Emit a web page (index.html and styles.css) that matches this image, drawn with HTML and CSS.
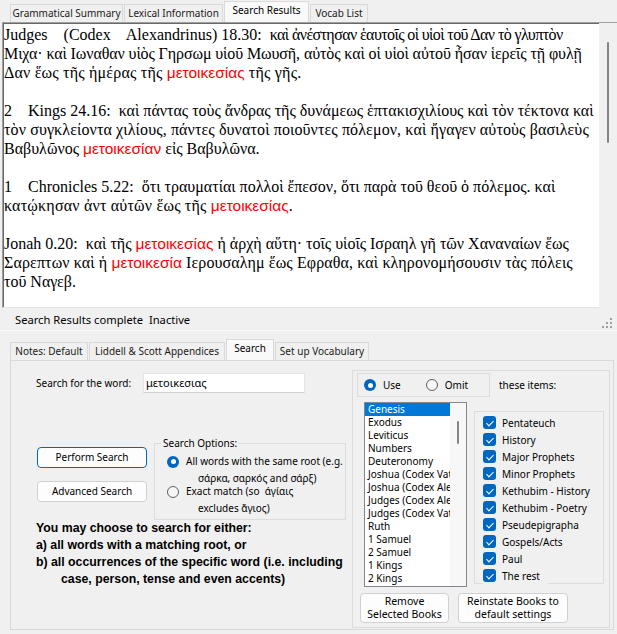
FILE: index.html
```html
<!DOCTYPE html>
<html lang="en">
<head>
<meta charset="utf-8">
<title>Search</title>
<link rel="stylesheet" href="styles.css">
</head>
<body>
<div class="top">
  <div class="tabs top-tabs">
    <div class="tab w-gram">Grammatical Summary</div>
    <div class="tab w-lex">Lexical Information</div>
    <div class="tab sel w-res">Search Results</div>
    <div class="tab w-voc">Vocab List</div>
  </div>
  <div class="results">
    <div class="text" lang="grc">
      <div class="para">
        <div class="ln fit-a"><span class="ref" lang="en"><span class="bk">Judges (Codex Alexandrinus)</span> 18.30:&nbsp; </span>καὶ ἀνέστησαν ἑαυτοῖς οἱ υἱοὶ τοῦ Δαν τὸ γλυπτὸν</div>
        <div class="ln fit-b">Μιχα· καὶ Ιωναθαν υἱὸς Γηρσωμ υἱοῦ Μωυσῆ, αὐτὸς καὶ οἱ υἱοὶ αὐτοῦ ἦσαν ἱερεῖς τῇ φυλῇ</div>
        <div class="ln fit-c">Δαν ἕως τῆς ἡμέρας τῆς <span class="hit">μετοικεσίας</span> τῆς γῆς.</div>
      </div>
      <div class="para">
        <div class="ln"><span class="ref" lang="en"><span class="bk">2 Kings</span> 24.16:&nbsp; </span>καὶ πάντας τοὺς ἄνδρας τῆς δυνάμεως ἑπτακισχιλίους καὶ τὸν τέκτονα καὶ</div>
        <div class="ln fit-d">τὸν συγκλείοντα χιλίους, πάντες δυνατοὶ ποιοῦντες πόλεμον, καὶ ἤγαγεν αὐτοὺς βασιλεὺς</div>
        <div class="ln">Βαβυλῶνος <span class="hit">μετοικεσίαν</span> εἰς Βαβυλῶνα.</div>
      </div>
      <div class="para">
        <div class="ln"><span class="ref" lang="en"><span class="bk">1 Chronicles</span> 5.22:&nbsp; </span>ὅτι τραυματίαι πολλοὶ ἔπεσον, ὅτι παρὰ τοῦ θεοῦ ὁ πόλεμος. καὶ</div>
        <div class="ln fit-c">κατῴκησαν ἀντ αὐτῶν ἕως τῆς <span class="hit">μετοικεσίας</span>.</div>
      </div>
      <div class="para">
        <div class="ln"><span class="ref" lang="en">Jonah 0.20:&nbsp; </span>καὶ τῆς <span class="hit">μετοικεσίας</span> ἡ ἀρχὴ αὕτη· τοῖς υἱοῖς Ισραηλ γῆ τῶν Χαναναίων ἕως</div>
        <div class="ln fit-d">Σαρεπτων καὶ ἡ <span class="hit">μετοικεσία</span> Ιερουσαλημ ἕως Εφραθα, καὶ κληρονομήσουσιν τὰς πόλεις</div>
        <div class="ln">τοῦ Ναγεβ.</div>
      </div>
    </div>
    <div class="vscroll"><div class="thumb"></div></div>
  </div>
</div>

<div class="status">
  <span class="status-text">Search Results complete&nbsp; Inactive</span>
  <svg class="grip" width="10" height="10" viewBox="0 0 10 10" aria-hidden="true">
    <rect x="8" y="0" width="2" height="2" fill="#a0a0a0"/>
    <rect x="4" y="4" width="2" height="2" fill="#a0a0a0"/>
    <rect x="8" y="4" width="2" height="2" fill="#a0a0a0"/>
    <rect x="0" y="8" width="2" height="2" fill="#a0a0a0"/>
    <rect x="4" y="8" width="2" height="2" fill="#a0a0a0"/>
    <rect x="8" y="8" width="2" height="2" fill="#a0a0a0"/>
  </svg>
</div>

<div class="bottom">
  <div class="tabs bottom-tabs">
    <div class="tab w-notes">Notes: Default</div>
    <div class="tab w-ls">Liddell &amp; Scott Appendices</div>
    <div class="tab sel w-search">Search</div>
    <div class="tab w-setup">Set up Vocabulary</div>
  </div>
  <div class="panel">
    <div class="leftcol">
      <div class="wordrow">
        <span class="wordlabel">Search for the word:</span>
        <div class="input">μετοικεσιας</div>
      </div>
      <div class="actions">
        <div class="btns">
          <div class="btn primary">Perform Search</div>
          <div class="btn">Advanced Search</div>
        </div>
        <fieldset class="options">
          <legend>Search Options:</legend>
          <div class="radio first">
            <span class="rb on"></span>
            <span class="rtext">All words with the same root (e.g.<br>σάρκα, σαρκός and σάρξ)</span>
          </div>
          <div class="radio second">
            <span class="rb"></span>
            <span class="rtext">Exact match (so&nbsp; άγίαις<br>excludes ἄγιος)</span>
          </div>
        </fieldset>
      </div>
      <div class="help">
        <div>You may choose to search for either:</div>
        <div>a) all words with a matching root, or</div>
        <div class="hang">b) all occurrences of the specific word (i.e. including<br>case, person, tense and even accents)</div>
      </div>
    </div>

    <div class="books">
      <div class="userow">
        <div class="useomit">
          <span class="opt"><span class="rb on"></span>Use</span>
          <span class="opt omit"><span class="rb"></span>Omit</span>
        </div>
        <span class="items-label">these items:</span>
      </div>
      <div class="lists">
        <div class="listbox">
          <div class="items">
            <div class="item selected">Genesis</div>
            <div class="item">Exodus</div>
            <div class="item">Leviticus</div>
            <div class="item">Numbers</div>
            <div class="item">Deuteronomy</div>
            <div class="item">Joshua (Codex Vaticanus)</div>
            <div class="item">Joshua (Codex Alexandrinus)</div>
            <div class="item">Judges (Codex Alexandrinus)</div>
            <div class="item">Judges (Codex Vaticanus)</div>
            <div class="item">Ruth</div>
            <div class="item">1 Samuel</div>
            <div class="item">2 Samuel</div>
            <div class="item">1 Kings</div>
            <div class="item">2 Kings</div>
          </div>
          <div class="lscroll"><div class="lthumb"></div></div>
        </div>
        <div class="checks">
          <div class="chk"><span class="cb"></span>Pentateuch</div>
          <div class="chk"><span class="cb"></span>History</div>
          <div class="chk"><span class="cb"></span>Major Prophets</div>
          <div class="chk"><span class="cb"></span>Minor Prophets</div>
          <div class="chk"><span class="cb"></span>Kethubim - History</div>
          <div class="chk"><span class="cb"></span>Kethubim - Poetry</div>
          <div class="chk"><span class="cb"></span>Pseudepigrapha</div>
          <div class="chk"><span class="cb"></span>Gospels/Acts</div>
          <div class="chk"><span class="cb"></span>Paul</div>
          <div class="chk"><span class="cb"></span>The rest</div>
        </div>
      </div>
      <div class="bookbtns">
        <div class="btn tall w-remove">Remove<br>Selected Books</div>
        <div class="btn tall w-reinstate">Reinstate Books to<br>default settings</div>
      </div>
    </div>
  </div>
</div>
</body>
</html>
```

FILE: styles.css
```css
* { box-sizing: border-box; }
html, body { margin: 0; padding: 0; }
body {
  width: 617px;
  height: 634px;
  overflow: hidden;
  background: #f0f0f0;
  font-family: "Noto Sans", "Open Sans", sans-serif;
  font-size: 10px;
  color: #000;
}

/* ---------- tabs ---------- */
.tabs {
  display: flex;
  align-items: flex-end;
  gap: 1px;
  padding-left: 10px;
}
.top-tabs { height: 22px; }
.tab {
  height: 18px;
  border: 1px solid #d9d9d9;
  border-bottom: none;
  background: #f0f0f0;
  text-align: center;
  line-height: 16px;
  white-space: nowrap;
  color: #1a1a1a;
}
.tab.sel {
  height: 21px;
  background: #f9f9f9;
  line-height: 17px;
  color: #000;
}
.w-gram { width: 113px; }
.w-lex { width: 99px; }
.w-res { width: 85px; }
.w-voc { width: 58px; }
.w-notes { width: 78px; }
.w-ls { width: 136px; }
.w-search { width: 48px; }
.w-setup { width: 94px; }

/* ---------- results ---------- */
.results {
  display: flex;
  height: 286px;
  margin-left: 2px;
  border-top: 1px solid #a0a0a0;
  box-shadow: inset 0 1px 0 #696969;
}
.text {
  flex: 1;
  background: #fff;
  border-left: 1px solid #a0a0a0;
  box-shadow: inset 1px 1px 0 #696969;
  border-bottom: 1px solid #e3e3e3;
  padding: 2px 0 0 1px;
  font-family: "Liberation Serif", "DejaVu Serif Condensed", "DejaVu Serif", serif;
  font-size: 16px;
  line-height: 19px;
  overflow: hidden;
}
.para { margin-bottom: 19px; }
.ln {
  height: 19px;
  white-space: nowrap;
}
.fit-a { letter-spacing: -0.6px; }
.fit-b { letter-spacing: -0.1px; }
.fit-c { letter-spacing: 0.2px; }
.fit-d { letter-spacing: 0.12px; }
.ref {
  font-family: "Liberation Serif", serif;
  letter-spacing: 0;
}
.bk { word-spacing: 12px; }
.hit {
  color: #f00;
  font-family: "Liberation Sans", Arial, sans-serif;
  font-size: 15.5px;
  letter-spacing: 0;
}
.vscroll {
  width: 18px;
  background: #f0f0f0;
  padding: 19px 0 0 8px;
}
.thumb {
  width: 2px;
  height: 101px;
  border-radius: 1px;
  background: #858585;
}

/* ---------- status ---------- */
.status {
  display: flex;
  align-items: center;
  height: 23px;
  padding: 1px 5px 0 15px;
  border-bottom: 1px solid #fbfbfb;
  font-size: 11.2px;
}
.grip { margin-left: auto; margin-top: 6px; }

/* ---------- bottom panel ---------- */
.bottom { margin-top: 8px; }
.bottom-tabs { height: 21px; }
.panel {
  display: flex;
  margin-left: 10px;
  width: 604px;
  height: 270px;
  border: 1px solid #d9d9d9;
}
.leftcol { width: 341px; }

.wordrow {
  display: flex;
  align-items: center;
  margin-top: 12px;
  padding-left: 25px;
  height: 20px;
}
.wordlabel { width: 107px; }
.input {
  width: 162px;
  height: 20px;
  background: #fff;
  border: 1px solid #e5e5e5;
  border-bottom-color: #d0d0d0;
  padding-left: 2px;
  font-size: 11px;
  line-height: 18px;
}

.actions {
  display: flex;
  align-items: flex-start;
  margin-top: 44px;
  padding-left: 26px;
}
.btns {
  width: 110px;
  padding-top: 10px;
}
.btn {
  height: 21px;
  background: #fdfdfd;
  border: 1px solid #d0d0d0;
  border-radius: 4px;
  text-align: center;
  line-height: 19px;
  white-space: nowrap;
}
.btns .btn + .btn { margin-top: 13px; }
.btn.primary { border-color: #0067c0; }

.options {
  margin: 0 0 0 7px;
  width: 192px;
  height: 83px;
  padding: 0 0 0 6px;
  border: 1px solid #dcdcdc;
  min-width: 0;
}
.options legend {
  padding: 0 2px;
  line-height: 13px;
  font-size: 10px;
}
.radio {
  display: flex;
  align-items: flex-start;
  margin-left: 6px;
  line-height: 17px;
}
.radio.first { margin-top: 3px; }
.radio.second { margin-top: -4px; }
.radio .rb { margin-top: 2.5px; }
.rtext {
  margin-left: 7px;
  padding-left: 12px;
  text-indent: -12px;
  white-space: nowrap;
}

.rb {
  flex: none;
  display: inline-flex;
  align-items: center;
  justify-content: center;
  width: 12px;
  height: 12px;
  border-radius: 50%;
  border: 1px solid #5f5f5f;
  background: #f6f6f6;
}
.rb.on {
  border: none;
  background: #0067c0;
}
.rb.on::after {
  content: "";
  width: 5px;
  height: 5px;
  border-radius: 50%;
  background: #fff;
}

.help {
  margin-left: 25px;
  font-family: "Liberation Sans", Arial, sans-serif;
  font-weight: bold;
  font-size: 12.3px;
  line-height: 17px;
  white-space: nowrap;
  color: #000;
}
.help .hang {
  padding-left: 25px;
  text-indent: -25px;
}

/* ---------- right side ---------- */
.books {
  display: flex;
  flex-direction: column;
  margin-top: 9px;
  width: 258px;
  height: 258px;
  border: 1px solid #dcdcdc;
}
.userow {
  display: flex;
  align-items: center;
  margin: 2px 0 0 4px;
}
.useomit {
  display: flex;
  align-items: center;
  width: 133px;
  height: 24px;
  border: 1px solid #dcdcdc;
  padding-left: 6px;
}
.opt {
  display: inline-flex;
  align-items: center;
  gap: 7px;
}
.opt .rb { width: 12px; height: 12px; }
.opt.omit { margin-left: 25px; }
.items-label { margin-left: 9px; }

.lists {
  display: flex;
  align-items: flex-start;
  margin-top: 5px;
  padding-left: 11px;
}
.listbox {
  display: flex;
  width: 103px;
  height: 185px;
  border: 1px solid #828790;
  background: #fff;
}
.items {
  width: 85px;
  overflow: hidden;
}
.item {
  height: 13px;
  line-height: 13px;
  padding-left: 3px;
  white-space: nowrap;
  overflow: hidden;
}
.item.selected {
  background: #0078d7;
  color: #fff;
}
.lscroll {
  flex: 1;
  background: #f7f7f7;
  padding: 18px 0 0 7px;
}
.lthumb {
  width: 2px;
  height: 23px;
  border-radius: 1px;
  background: #858585;
}

.checks {
  margin: 9px 0 0 7px;
  width: 130px;
  height: 173px;
  border: 1px solid #dcdcdc;
  padding: 2px 0 0 8px;
}
.chk {
  display: flex;
  align-items: center;
  gap: 6px;
  width: fit-content;
  height: 17px;
  padding-right: 8px;
  background: #f0f0f0;
  white-space: nowrap;
}
.cb {
  flex: none;
  position: relative;
  width: 13px;
  height: 13px;
  border-radius: 3px;
  background: #0067c0;
}
.cb::after {
  content: "";
  position: absolute;
  left: 4.5px;
  top: 2.5px;
  width: 3px;
  height: 6px;
  border: solid #fff;
  border-width: 0 1.2px 1.2px 0;
  transform: rotate(45deg);
}

.bookbtns {
  display: flex;
  gap: 9px;
  margin-top: 6px;
  padding-left: 7px;
}
.btn.tall {
  height: 30px;
  line-height: 13px;
  padding-top: 1px;
  font-size: 10.5px;
}
.w-remove { width: 89px; }
.w-reinstate { width: 110px; }
```
